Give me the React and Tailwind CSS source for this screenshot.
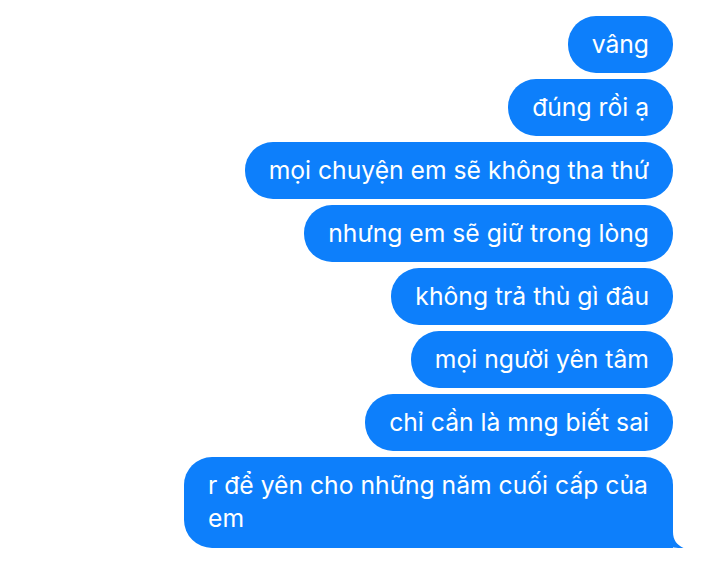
import React from 'react';

const messages = [
  'vâng',
  'đúng rồi ạ',
  'mọi chuyện em sẽ không tha thứ',
  'nhưng em sẽ giữ trong lòng',
  'không trả thù gì đâu',
  'mọi người yên tâm',
  'chỉ cần là mng biết sai',
  'r để yên cho những năm cuối cấp của em',
];

// iMessage-style tail on the last bubble
function Tail() {
  return (
    <svg
      className="absolute bottom-0 right-[-12px]"
      width="40"
      height="28"
      viewBox="0 0 40 28"
    >
      <path
        d="M0 0 H28 V12 C28 20 32 25 38.5 28 C31 28.6 23 26.5 18 23.5 C14 26.5 8 28 0 28 Z"
        fill="#0d7ffb"
      />
    </svg>
  );
}

export default function App() {
  return (
    <div
      className="w-[720px] h-[564px] bg-white flex flex-col items-end gap-[6px] pt-[16px] pr-[47px]"
      style={{ fontFamily: 'Inter, "Noto Sans", sans-serif' }}
    >
      {messages.map((m, i) => {
        const last = i === messages.length - 1;
        return (
          <div
            key={i}
            className={`relative bg-[#0d7ffb] text-white text-[24.7px] leading-[33.5px] px-[24px] py-[11.75px] rounded-[28px] ${last ? 'w-[489px] rounded-br-none pb-[12.5px]' : ''}`}
          >
            {m}
            {last && <Tail />}
          </div>
        );
      })}
    </div>
  );
}
